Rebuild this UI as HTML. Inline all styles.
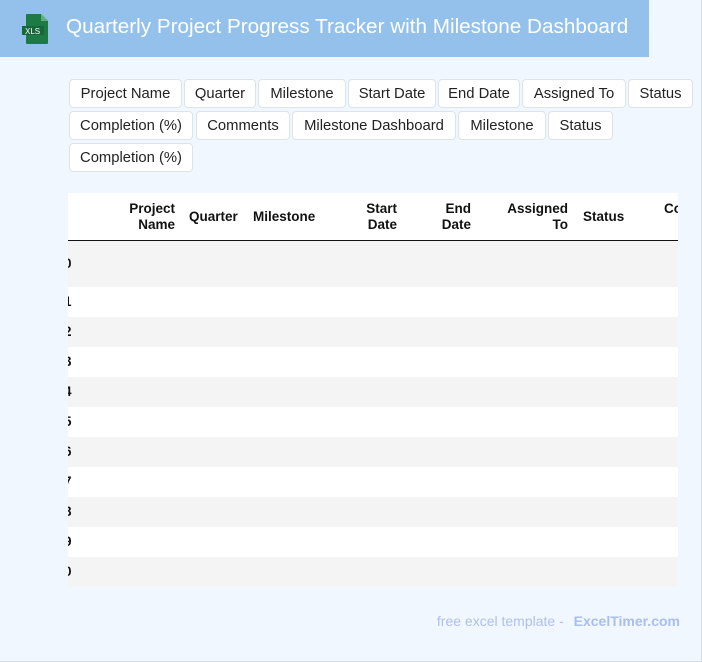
<!DOCTYPE html>
<html><head><style>
*{margin:0;padding:0;box-sizing:border-box}
body{width:702px;height:662px;background:#f0f7ff;font-family:"Liberation Sans",sans-serif;position:relative;overflow:hidden;border-right:1px solid #d8dee6;border-bottom:1px solid #d8dee6}
.hdr{position:absolute;left:0;top:0;width:649px;height:57px;background:#93c1ec}
.hdr h1{position:absolute;left:66px;top:15px;font-size:20.7px;font-weight:normal;color:#fff;white-space:nowrap}
.chip{position:absolute;height:29px;line-height:28px;text-align:center;background:#fff;border:1px solid #dbe3ec;border-radius:4px;font-size:14.8px;color:#222;white-space:nowrap}
.tbl{position:absolute;left:68px;top:193px;width:610px;height:394px;background:#fff;overflow:hidden}
.th{position:absolute;font-size:13.5px;font-weight:bold;color:#111;line-height:16px}
.line{position:absolute;left:0;top:47px;width:610px;height:1px;background:#111}
.row{position:absolute;left:0;width:610px;height:30px}
.g{background:#f4f4f4}
.n{position:absolute;left:-4px;font-size:13.5px;font-weight:bold;color:#111}
.foot{position:absolute;right:21px;top:613px;font-size:14px;color:#aebfee}
.foot b{color:#a9bdef;margin-left:6px}
</style></head><body>
<div class="hdr">
<svg style="position:absolute;left:22px;top:13px" width="28" height="32" viewBox="0 0 28 32"><path d="M5 1h14l7 7v22a1 1 0 0 1-1 1H5a1 1 0 0 1-1-1V2a1 1 0 0 1 1-1z" fill="#1d7a45"/><path d="M19 1v7h7z" fill="#5fae7e"/><rect x="0" y="13" width="22" height="9" fill="#16683a"/><text x="3" y="21" font-size="8" fill="#fff" font-family="Liberation Sans">XLS</text></svg>
<h1>Quarterly Project Progress Tracker with Milestone Dashboard</h1>
</div>
<span class="chip" style="left:69px;top:79px;width:113px">Project Name</span>
<span class="chip" style="left:184px;top:79px;width:72px">Quarter</span>
<span class="chip" style="left:258px;top:79px;width:88px">Milestone</span>
<span class="chip" style="left:348px;top:79px;width:88px">Start Date</span>
<span class="chip" style="left:438px;top:79px;width:82px">End Date</span>
<span class="chip" style="left:522px;top:79px;width:104px">Assigned To</span>
<span class="chip" style="left:628px;top:79px;width:65px">Status</span>
<span class="chip" style="left:69px;top:111px;width:124px">Completion (%)</span>
<span class="chip" style="left:196px;top:111px;width:94px">Comments</span>
<span class="chip" style="left:292px;top:111px;width:164px">Milestone Dashboard</span>
<span class="chip" style="left:458px;top:111px;width:88px">Milestone</span>
<span class="chip" style="left:548px;top:111px;width:65px">Status</span>
<span class="chip" style="left:69px;top:143px;width:124px">Completion (%)</span>
<div class="tbl">
<div class="th" style="right:503px;top:8px;text-align:right">Project<br>Name</div>
<div class="th" style="left:121px;top:16px">Quarter</div>
<div class="th" style="left:185px;top:16px">Milestone</div>
<div class="th" style="right:281px;top:8px;text-align:right">Start<br>Date</div>
<div class="th" style="right:207px;top:8px;text-align:right">End<br>Date</div>
<div class="th" style="right:110px;top:8px;text-align:right">Assigned<br>To</div>
<div class="th" style="left:515px;top:16px">Status</div>
<div class="th" style="left:596px;top:8px">Co</div>
<div class="line"></div>
<div class="row g" style="top:48px;height:46px"><span class="n" style="top:15px">0</span></div>
<div class="row" style="top:94px"><span class="n" style="top:7px">1</span></div>
<div class="row g" style="top:124px"><span class="n" style="top:7px">2</span></div>
<div class="row" style="top:154px"><span class="n" style="top:7px">3</span></div>
<div class="row g" style="top:184px"><span class="n" style="top:7px">4</span></div>
<div class="row" style="top:214px"><span class="n" style="top:7px">5</span></div>
<div class="row g" style="top:244px"><span class="n" style="top:7px">6</span></div>
<div class="row" style="top:274px"><span class="n" style="top:7px">7</span></div>
<div class="row g" style="top:304px"><span class="n" style="top:7px">8</span></div>
<div class="row" style="top:334px"><span class="n" style="top:7px">9</span></div>
<div class="row g" style="top:364px"><span class="n" style="top:7px">0</span></div>
</div>
<div class="foot">free excel template - <b>ExcelTimer.com</b></div>
</body></html>
